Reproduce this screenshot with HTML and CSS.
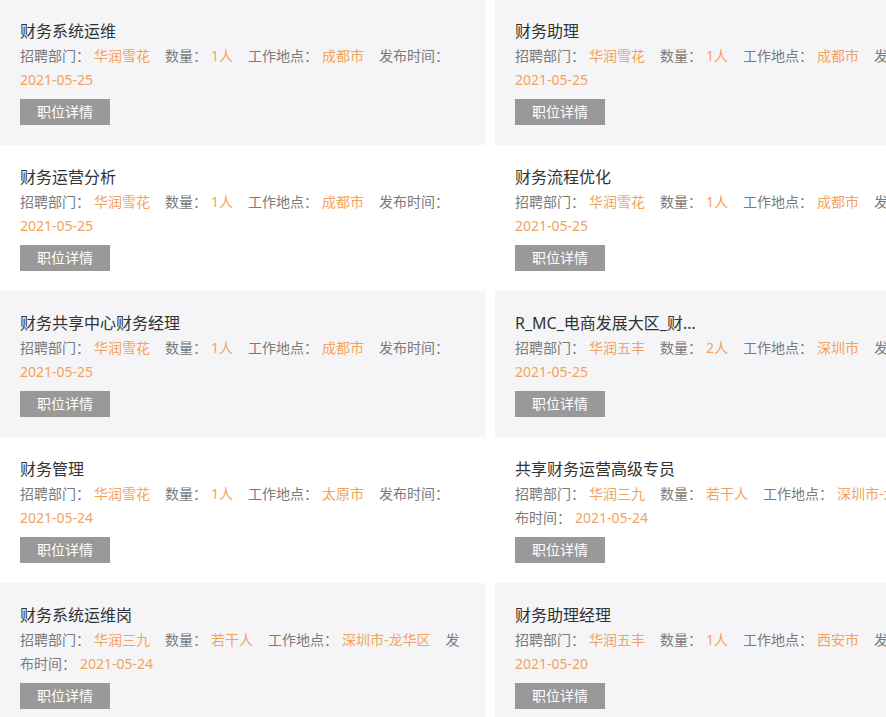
FILE: index.html
```html
<!DOCTYPE html>
<html lang="zh-CN">
<head>
  <meta charset="UTF-8" />
  <meta name="viewport" content="width=device-width, initial-scale=1" />
  <title>社会招聘 - 职位列表</title>
  <link rel="stylesheet" href="styles.css">
</head>
<body>
  <!-- 职位列表：两列卡片，奇数行灰底 -->
  <div class="job-list">
    <div class="job-card">
      <h3 class="job-title">财务系统运维</h3>
      <p class="job-meta"><span class="label">招聘部门：</span><span class="val">华润雪花</span><span class="label">数量：</span><span class="val">1人</span><span class="label">工作地点：</span><span class="val">成都市</span><span class="label">发布时间：</span><span class="val date">2021-05-25</span></p>
      <a class="btn-detail" href="#">职位详情</a>
    </div>
    <div class="job-card">
      <h3 class="job-title">财务助理</h3>
      <p class="job-meta"><span class="label">招聘部门：</span><span class="val">华润雪花</span><span class="label">数量：</span><span class="val">1人</span><span class="label">工作地点：</span><span class="val">成都市</span><span class="label">发布时间：</span><span class="val date">2021-05-25</span></p>
      <a class="btn-detail" href="#">职位详情</a>
    </div>

    <div class="job-card">
      <h3 class="job-title">财务运营分析</h3>
      <p class="job-meta"><span class="label">招聘部门：</span><span class="val">华润雪花</span><span class="label">数量：</span><span class="val">1人</span><span class="label">工作地点：</span><span class="val">成都市</span><span class="label">发布时间：</span><span class="val date">2021-05-25</span></p>
      <a class="btn-detail" href="#">职位详情</a>
    </div>
    <div class="job-card">
      <h3 class="job-title">财务流程优化</h3>
      <p class="job-meta"><span class="label">招聘部门：</span><span class="val">华润雪花</span><span class="label">数量：</span><span class="val">1人</span><span class="label">工作地点：</span><span class="val">成都市</span><span class="label">发布时间：</span><span class="val date">2021-05-25</span></p>
      <a class="btn-detail" href="#">职位详情</a>
    </div>

    <div class="job-card">
      <h3 class="job-title">财务共享中心财务经理</h3>
      <p class="job-meta"><span class="label">招聘部门：</span><span class="val">华润雪花</span><span class="label">数量：</span><span class="val">1人</span><span class="label">工作地点：</span><span class="val">成都市</span><span class="label">发布时间：</span><span class="val date">2021-05-25</span></p>
      <a class="btn-detail" href="#">职位详情</a>
    </div>
    <div class="job-card">
      <h3 class="job-title">R_MC_电商发展大区_财务经理</h3>
      <p class="job-meta"><span class="label">招聘部门：</span><span class="val">华润五丰</span><span class="label">数量：</span><span class="val">2人</span><span class="label">工作地点：</span><span class="val">深圳市</span><span class="label">发布时间：</span><span class="val date">2021-05-25</span></p>
      <a class="btn-detail" href="#">职位详情</a>
    </div>

    <div class="job-card">
      <h3 class="job-title">财务管理</h3>
      <p class="job-meta"><span class="label">招聘部门：</span><span class="val">华润雪花</span><span class="label">数量：</span><span class="val">1人</span><span class="label">工作地点：</span><span class="val">太原市</span><span class="label">发布时间：</span><span class="val date">2021-05-24</span></p>
      <a class="btn-detail" href="#">职位详情</a>
    </div>
    <div class="job-card">
      <h3 class="job-title">共享财务运营高级专员</h3>
      <p class="job-meta"><span class="label">招聘部门：</span><span class="val">华润三九</span><span class="label">数量：</span><span class="val">若干人</span><span class="label">工作地点：</span><span class="val">深圳市-龙华区</span><span class="label">发布时间：</span><span class="val date">2021-05-24</span></p>
      <a class="btn-detail" href="#">职位详情</a>
    </div>

    <div class="job-card">
      <h3 class="job-title">财务系统运维岗</h3>
      <p class="job-meta"><span class="label">招聘部门：</span><span class="val">华润三九</span><span class="label">数量：</span><span class="val">若干人</span><span class="label">工作地点：</span><span class="val">深圳市-龙华区</span><span class="label">发布时间：</span><span class="val date">2021-05-24</span></p>
      <a class="btn-detail" href="#">职位详情</a>
    </div>
    <div class="job-card">
      <h3 class="job-title">财务助理经理</h3>
      <p class="job-meta"><span class="label">招聘部门：</span><span class="val">华润五丰</span><span class="label">数量：</span><span class="val">1人</span><span class="label">工作地点：</span><span class="val">西安市</span><span class="label">发布时间：</span><span class="val date">2021-05-20</span></p>
      <a class="btn-detail" href="#">职位详情</a>
    </div>
  </div>
</body>
</html>
```

FILE: styles.css
```css
/* ===== 基础 ===== */
body {
  margin: 0;
  background-color: #fff;
  font-family: "Noto Sans", "Noto Sans CJK SC", sans-serif;
  color: #333;
  overflow: hidden;
}

/* ===== 职位列表 ===== */
.job-list {
  display: grid;
  grid-template-columns: 485px 485px;
  column-gap: 10px;
  width: 980px;
  margin-top: -1px;
}
.job-card {
  height: 146px;
  box-sizing: border-box;
  padding: 20px 20px 0 20px;
  background-color: #fff;
}
/* 奇数行（每行两张卡片）灰底 */
.job-card:nth-child(4n+1),
.job-card:nth-child(4n+2) {
  background-color: #f5f5f7;
}

.job-title {
  max-width: 186px;
  margin: 0 0 1px;
  font-size: 16px;
  font-weight: normal;
  line-height: 24px;
  color: #333;
  white-space: nowrap;
  overflow: hidden;
  text-overflow: ellipsis;
}

.job-meta {
  margin: 0;
  font-size: 14px;
  line-height: 24px;
  color: #7a7a7a;
}
.job-meta .label {
  margin-right: 4px;
}
.job-meta .val {
  margin-right: 15px;
  color: #f2a35e;
}
.job-meta .date {
  margin-right: 0;
  white-space: nowrap;
}

.btn-detail {
  display: block;
  width: 90px;
  height: 26px;
  margin-top: 7px;
  background-color: #999;
  color: #fff;
  font-size: 14px;
  line-height: 26px;
  text-align: center;
  text-decoration: none;
}
.btn-detail:hover {
  background-color: #888;
}
```
